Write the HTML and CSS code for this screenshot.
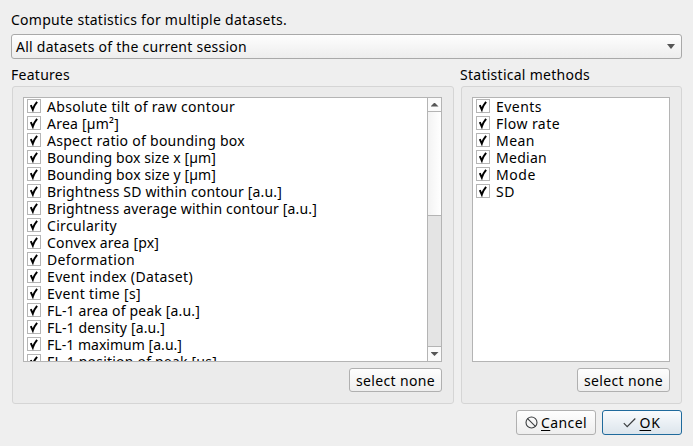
FILE: index.html
```
<!DOCTYPE html>
<html lang="en">
<head>
<meta charset="utf-8">
<title>Compute statistics</title>
<link rel="stylesheet" href="styles.css">
</head>
<body>
<svg width="0" height="0" class="defs"><defs>
<symbol id="tick" viewBox="0 0 14 14"><rect x=".5" y=".5" width="13" height="13" fill="#fff" stroke="#b5b5b5"/><path d="M3.8 6.2 L5.8 10.6 Q7 6.4 10.1 2.8" fill="none" stroke="#000" stroke-width="2"/></symbol>
</defs></svg>
<main class="dialog">
<p class="intro"><span data-width="276">Compute statistics for multiple datasets.</span></p>
<div class="combo"><span data-width="231">All datasets of the current session</span><i class="arrow down"></i></div>
<div class="groups">
<section class="group features">
<h2><span data-width="59">Features</span></h2>
<div class="frame">
<div class="list">
<ul id="features"></ul>
<div class="scrollbar"><div class="step"><i class="arrow up"></i></div><div class="thumb"></div><div class="track"></div><div class="step last"><i class="arrow down"></i></div></div>
</div>
<button class="select"><span data-width="79">select none</span></button>
</div>
</section>
<section class="group methods">
<h2><span data-width="130">Statistical methods</span></h2>
<div class="frame">
<div class="list"><ul id="methods"></ul></div>
<button class="select"><span data-width="79">select none</span></button>
</div>
</section>
</div>
<footer>
<button class="action"><svg width="13" height="13" viewBox="0 0 13 13"><g fill="none" stroke="#3b3e40" stroke-width="1.1"><circle cx="6.5" cy="6.5" r="5.5"/><path d="M2.6 2.6L10.4 10.4"/></g></svg><span data-width="46"><u>C</u>ancel</span></button>
<button class="action ok"><svg width="13" height="13" viewBox="0 0 13 13"><path d="M.8 7.2L4.2 10.6L12.3 2.5" fill="none" stroke="#3b3e40" stroke-width="1.2"/></svg><span data-width="21"><u>O</u>K</span></button>
</footer>
</main>
<script src="app.js"></script>
</body>
</html>
```
FILE: styles.css
```
* { box-sizing: border-box; }
body { margin: 0; width: 693px; height: 446px; overflow: hidden; background: #efefef; color: #000; font: 14px/17px "Noto Sans", "Open Sans", sans-serif; white-space: nowrap; }
.defs { display: none; }
.dialog { padding: 11px 11px 0; height: 446px; }
.intro { margin: 0 0 6px; }
.combo { height: 25px; margin-bottom: 7px; border: 1px solid #a9a9a9; border-radius: 3px; background: linear-gradient(#fefefe, #ededed); display: flex; align-items: flex-start; justify-content: space-between; padding: 3px 6px 0 4px; }
.combo .arrow { margin-top: 6px; }
.arrow { width: 8px; height: 5px; background: #555; flex: none; }
.down { clip-path: polygon(0 0, 100% 0, 50% 100%); }
.up { clip-path: polygon(50% 0, 100% 100%, 0 100%); }
.groups { display: flex; gap: 7px; }
.features { width: 443px; }
.methods { width: 221px; }
.methods h2 { margin-left: -1px; }
h2 { margin: 0 0 3px; font: inherit; }
.frame { height: 318px; border: 1px solid #d5d5d5; border-radius: 3px; background: #ebebeb; padding: 10px 11px 0 10px; display: flex; flex-direction: column; align-items: flex-end; gap: 6px; }
.features .frame { margin-left: 1px; }
.list { width: 100%; height: 265px; border: 1px solid #b4b4b4; background: #fff; display: flex; overflow: hidden; }
.list ul { list-style: none; margin: 0; padding: 0 0 0 3px; flex: 1; min-width: 0; }
.list li { height: 17px; display: flex; align-items: flex-start; gap: 6px; }
.list li svg { width: 14px; height: 14px; flex: none; margin-top: 1px; }
.scrollbar { width: 14px; border-left: 1px solid #b4b4b4; display: flex; flex-direction: column; }
.step { height: 14px; border-bottom: 1px solid #b4b4b4; background: #fafafa; display: flex; align-items: center; justify-content: center; }
.step .arrow { height: 4px; }
.step.last { height: 15px; border-top: 1px solid #b4b4b4; border-bottom: 0; }
.thumb { height: 104px; border-bottom: 1px solid #b4b4b4; background: linear-gradient(90deg, #f3f3f3, #fff); }
.track { flex: 1; background: #e4e4e4; }
button { font: inherit; color: inherit; padding: 0; border: 1px solid #b0b0b0; border-radius: 3px; background: linear-gradient(#fefefe, #eee); }
.select { width: 93px; height: 24px; }
footer { display: flex; justify-content: flex-end; gap: 6px; margin-top: 6px; }
.action { width: 80px; height: 25px; display: flex; align-items: center; justify-content: center; gap: 3px; padding-bottom: 1px; }
.ok { border-color: #1f6a9c; background: linear-gradient(#f9fbfd, #dce5ec); }
u { text-underline-offset: 2px; text-decoration-skip-ink: none; }
```
FILE: app.js
```
const features = [["Absolute tilt of raw contour", 188], ["Area [µm²]", 72], ["Aspect ratio of bounding box", 198], ["Bounding box size x [µm]", 169], ["Bounding box size y [µm]", 169], ["Brightness SD within contour [a.u.]", 235], ["Brightness average within contour [a.u.]", 270], ["Circularity", 70], ["Convex area [px]", 112], ["Deformation", 88], ["Event index (Dataset)", 146], ["Event time [s]", 94], ["FL-1 area of peak [a.u.]", 153], ["FL-1 density [a.u.]", 118], ["FL-1 maximum [a.u.]", 135], ["FL-1 position of peak [µs]", 170]];
const methods = [["Events", 46], ["Flow rate", 64], ["Mean", 39], ["Median", 51], ["Mode", 40], ["SD", 19]];
const fill = (id, items) => {
  document.getElementById(id).innerHTML = items.map(([t, w]) => `<li><svg><use href="#tick"/></svg><span data-width="${w}">${t}</span></li>`).join("");
};
fill("features", features);
fill("methods", methods);
// Space each label's letters so that it fills its own width.
document.querySelectorAll("[data-width]").forEach(el => {
  const gap = (el.dataset.width - el.getBoundingClientRect().width) / el.textContent.length;
  el.style.letterSpacing = gap.toFixed(3) + "px";
});
```
